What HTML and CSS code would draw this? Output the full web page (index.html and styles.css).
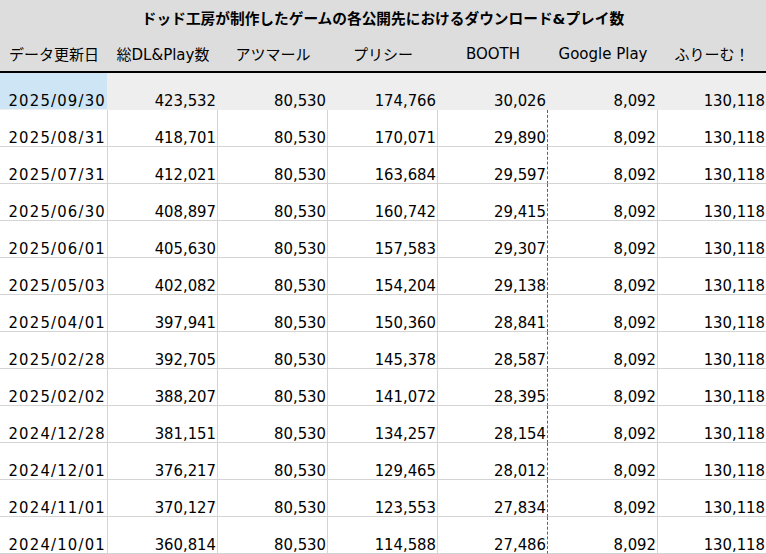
FILE: index.html
```html
<!DOCTYPE html>
<html lang="ja">
<head>
<meta charset="utf-8">
<title>ドッド工房 ダウンロード&amp;プレイ数</title>
<link rel="stylesheet" href="styles.css">
</head>
<body>
<div class="sheet">
  <div class="title">ドッド工房が制作したゲームの各公開先におけるダウンロード&amp;プレイ数</div>
  <div class="head">
    <div class="hcell">データ更新日</div>
    <div class="hcell">総DL&amp;Play数</div>
    <div class="hcell">アツマール</div>
    <div class="hcell">プリシー</div>
    <div class="hcell">BOOTH</div>
    <div class="hcell">Google Play</div>
    <div class="hcell">ふりーむ！</div>
  </div>
  <div class="row sel">
    <div class="cell date">2025/09/30</div><div class="cell">423,532</div><div class="cell">80,530</div><div class="cell">174,766</div><div class="cell brk">30,026</div><div class="cell">8,092</div><div class="cell last">130,118</div>
  </div>
  <div class="row">
    <div class="cell date">2025/08/31</div><div class="cell">418,701</div><div class="cell">80,530</div><div class="cell">170,071</div><div class="cell brk">29,890</div><div class="cell">8,092</div><div class="cell last">130,118</div>
  </div>
  <div class="row">
    <div class="cell date">2025/07/31</div><div class="cell">412,021</div><div class="cell">80,530</div><div class="cell">163,684</div><div class="cell brk">29,597</div><div class="cell">8,092</div><div class="cell last">130,118</div>
  </div>
  <div class="row">
    <div class="cell date">2025/06/30</div><div class="cell">408,897</div><div class="cell">80,530</div><div class="cell">160,742</div><div class="cell brk">29,415</div><div class="cell">8,092</div><div class="cell last">130,118</div>
  </div>
  <div class="row">
    <div class="cell date">2025/06/01</div><div class="cell">405,630</div><div class="cell">80,530</div><div class="cell">157,583</div><div class="cell brk">29,307</div><div class="cell">8,092</div><div class="cell last">130,118</div>
  </div>
  <div class="row">
    <div class="cell date">2025/05/03</div><div class="cell">402,082</div><div class="cell">80,530</div><div class="cell">154,204</div><div class="cell brk">29,138</div><div class="cell">8,092</div><div class="cell last">130,118</div>
  </div>
  <div class="row">
    <div class="cell date">2025/04/01</div><div class="cell">397,941</div><div class="cell">80,530</div><div class="cell">150,360</div><div class="cell brk">28,841</div><div class="cell">8,092</div><div class="cell last">130,118</div>
  </div>
  <div class="row">
    <div class="cell date">2025/02/28</div><div class="cell">392,705</div><div class="cell">80,530</div><div class="cell">145,378</div><div class="cell brk">28,587</div><div class="cell">8,092</div><div class="cell last">130,118</div>
  </div>
  <div class="row">
    <div class="cell date">2025/02/02</div><div class="cell">388,207</div><div class="cell">80,530</div><div class="cell">141,072</div><div class="cell brk">28,395</div><div class="cell">8,092</div><div class="cell last">130,118</div>
  </div>
  <div class="row">
    <div class="cell date">2024/12/28</div><div class="cell">381,151</div><div class="cell">80,530</div><div class="cell">134,257</div><div class="cell brk">28,154</div><div class="cell">8,092</div><div class="cell last">130,118</div>
  </div>
  <div class="row">
    <div class="cell date">2024/12/01</div><div class="cell">376,217</div><div class="cell">80,530</div><div class="cell">129,465</div><div class="cell brk">28,012</div><div class="cell">8,092</div><div class="cell last">130,118</div>
  </div>
  <div class="row">
    <div class="cell date">2024/11/01</div><div class="cell">370,127</div><div class="cell">80,530</div><div class="cell">123,553</div><div class="cell brk">27,834</div><div class="cell">8,092</div><div class="cell last">130,118</div>
  </div>
  <div class="row">
    <div class="cell date">2024/10/01</div><div class="cell">360,814</div><div class="cell">80,530</div><div class="cell">114,588</div><div class="cell brk">27,486</div><div class="cell">8,092</div><div class="cell last">130,118</div>
  </div>
</div>
</body>
</html>
```
FILE: styles.css
```css
html, body {
  margin: 0;
  padding: 0;
  background: #ffffff;
}

body {
  width: 766px;
  height: 554px;
  overflow: hidden;
  font-family: "DejaVu Sans", "Noto Sans CJK JP", sans-serif;
  color: #000000;
}

.sheet {
  display: flex;
  flex-direction: column;
}

.title {
  height: 36px;
  background: #dddddd;
  display: flex;
  align-items: center;
  justify-content: center;
  padding-bottom: 2px;
  box-sizing: border-box;
  font-size: 14.7px;
  font-weight: bold;
}

.head,
.row {
  display: grid;
  grid-template-columns: 108px repeat(5, 110px) 1fr;
}

.head {
  height: 37px;
  background: #dddddd;
  border-bottom: 2px solid #000000;
  box-sizing: border-box;
}

.hcell {
  display: flex;
  align-items: center;
  justify-content: center;
  font-size: 15px;
  white-space: nowrap;
}

.row {
  height: 37px;
}

.cell {
  display: flex;
  align-items: flex-end;
  justify-content: flex-end;
  padding-right: 1px;
  box-sizing: border-box;
  border-right: 1px solid #d4d4d4;
  border-bottom: 1px solid #d4d4d4;
  font-size: 16.5px;
  font-stretch: condensed;
  line-height: 16px;
  white-space: nowrap;
}

.cell.date {
  letter-spacing: 1.2px;
}

.cell.brk {
  border-right: 1px dashed #606060;
}

.cell.last {
  border-right: none;
}

.row.sel {
  background: #eeeeee;
}

.row.sel .cell {
  border-color: #eeeeee;
}

.row.sel .cell.date {
  background: #cde5f5;
}
```
